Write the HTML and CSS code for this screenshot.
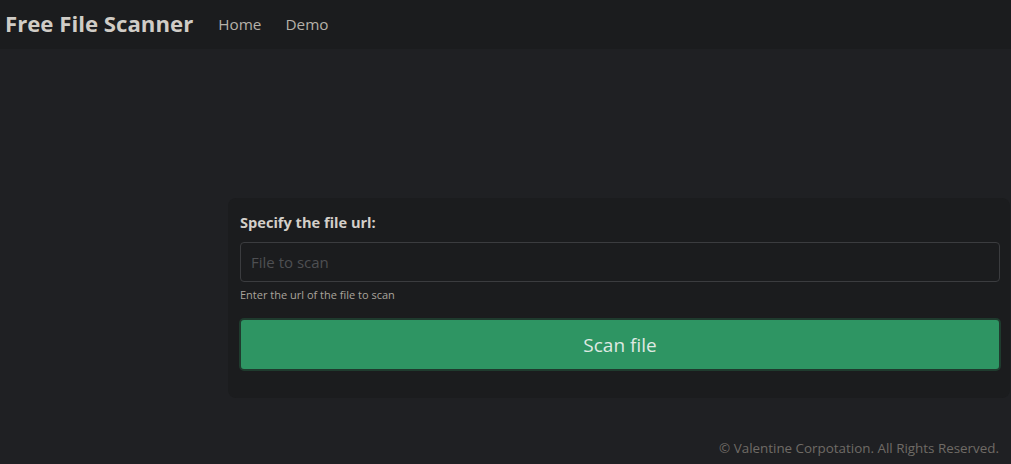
FILE: index.html
```html
<!DOCTYPE html>
<html lang="en">
<head>
<meta charset="utf-8">
<title>Free File Scanner</title>
<link rel="stylesheet" href="styles.css">
</head>
<body>
<nav class="navbar">
  <a class="brand" href="#">Free File Scanner</a>
  <ul class="nav-links">
    <li><a href="#">Home</a></li>
    <li><a href="#">Demo</a></li>
  </ul>
</nav>
<main class="main">
  <div class="spacer"></div>
  <form class="card">
    <label class="label" for="url">Specify the file url:</label>
    <input class="input" id="url" type="text" placeholder="File to scan">
    <div class="help">Enter the url of the file to scan</div>
    <button class="btn" type="button">Scan file</button>
  </form>
</main>
<footer class="footer">© Valentine Corpotation. All Rights Reserved.</footer>
</body>
</html>
```

FILE: styles.css
```css
* { box-sizing: border-box; }
html, body { margin: 0; padding: 0; }
body {
  background: #1f2023;
  font-family: "Open Sans", "Noto Sans", sans-serif;
  color: #d3cfc9;
  height: 464px;
  overflow: hidden;
}
.navbar {
  display: flex;
  align-items: center;
  height: 49px;
  background: #1b1c1e;
  padding: 0 5px 2px;
}
.brand {
  font-size: 22.2px;
  font-weight: 700;
  color: #d0ccc6;
  text-decoration: none;
  margin-right: 25px;
}
.nav-links {
  display: flex;
  gap: 24px;
  list-style: none;
  margin: 0;
  padding: 0;
}
.nav-links a {
  color: #b5b0a8;
  text-decoration: none;
  font-size: 15.3px;
}
.main {
  display: flex;
  flex-direction: column;
  align-items: flex-end;
  padding-right: 1px;
}
.spacer { height: 149px; }
.card {
  width: 782px;
  background: #1b1c1e;
  border-radius: 8px;
  padding: 12px 10px 27px 11px;
  display: flex;
  flex-direction: column;
}
.label {
  font-size: 14.6px;
  font-weight: 700;
  color: #d3cfc9;
  line-height: 24px;
  margin-bottom: 8px;
  padding-left: 1px;
}
.input {
  height: 40px;
  margin-left: 1px;
  background: #1b1c1e;
  border: 1px solid #3b3c3f;
  border-radius: 4px;
  padding: 0 10px;
  font-family: inherit;
  font-size: 15px;
  color: #d3cfc9;
}
.input::placeholder { color: #4e4f52; }
.help {
  font-size: 11px;
  color: #aaa49c;
  margin-top: 5px;
  padding-left: 1px;
  line-height: 16px;
}
.btn {
  margin: 15px -1px 0 0;
  height: 53px;
  background: #2e9563;
  border: 2px solid #1f3b2e;
  border-radius: 5px;
  color: #dfe9e2;
  font-family: inherit;
  font-size: 19px;
}
.footer {
  text-align: right;
  padding: 41px 12px 0 0;
  font-size: 13.4px;
  color: #6f6b66;
}
```
